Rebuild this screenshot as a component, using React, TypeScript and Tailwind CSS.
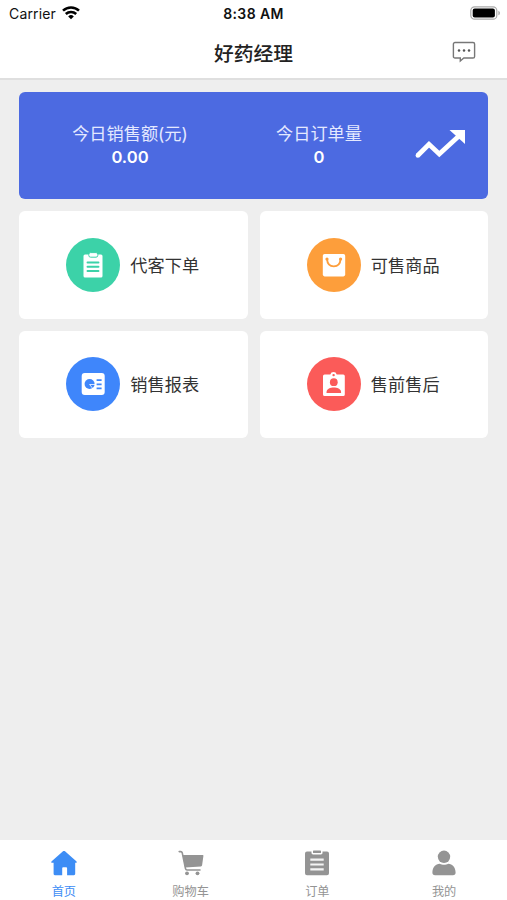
import React from 'react';

const ClipboardIcon = () => (
  <svg width="20" height="26" viewBox="0 0 20 26">
    <rect x="0.5" y="2.5" width="19" height="23" rx="1.5" fill="#fff" />
    <rect x="5.8" y="0.6" width="9" height="4.6" rx="1.8" fill="#fff" stroke="#3cd2a8" strokeWidth="1" />
    <path d="M4.5 10.5h11M4.5 14.7h11M4.5 19h11" stroke="#3cd2a8" strokeWidth="1.9" strokeLinecap="round" />
  </svg>
);

const BagIcon = () => (
  <svg width="24" height="24" viewBox="0 0 24 24">
    <rect x="0.8" y="1" width="22.4" height="22.4" rx="1.8" fill="#fff" />
    <circle cx="5" cy="6" r="1.6" fill="#fd9e3b" />
    <circle cx="18.6" cy="6" r="1.6" fill="#fd9e3b" />
    <path d="M5 6c.4 5 3.1 7.400 6.800 7.400S18.200 11 18.600 6" fill="none" stroke="#fd9e3b" strokeWidth="1.9" />
  </svg>
);

const ReportIcon = () => (
  <svg width="24" height="24" viewBox="0 0 24 24">
    <rect x="0.7" y="1" width="23" height="22" rx="3" fill="#fff" />
    <circle cx="8.6" cy="12" r="5" fill="#3f86fb" />
    <path d="M8.600 12.500h5.800M8.600 12.500l3.600 4.500" stroke="#fff" strokeWidth="0.8" />
    <path d="M15.600 8.200h5M15.600 12.300h5M15.600 16.400h5" stroke="#3f86fb" strokeWidth="1.7" />
  </svg>
);

const ServiceIcon = () => (
  <svg width="24" height="26" viewBox="0 0 24 26">
    <path d="M2.600 3.500h5.700a3.300 3.300 0 0 1 6.400 0h6.500a1.600 1.600 0 0 1 1.600 1.600v18.300a1.600 1.600 0 0 1-1.600 1.600H2.600A1.600 1.600 0 0 1 1 23.400V5.100a1.600 1.600 0 0 1 1.600-1.600z" fill="#fff" />
    <circle cx="11.6" cy="4.1" r="1.2" fill="#fb5b59" />
    <circle cx="11.8" cy="11.2" r="3.9" fill="#fb5b59" />
    <path d="M4.500 21.500c0-3.900 4.100-4.900 7.300-4.900s7.300 1 7.300 4.900v.4H4.500z" fill="#fb5b59" />
  </svg>
);

const menus = [
  { name: '代客下单', color: 'bg-[#3cd2a8]', icon: <ClipboardIcon /> },
  { name: '可售商品', color: 'bg-[#fd9e3b]', icon: <BagIcon /> },
  { name: '销售报表', color: 'bg-[#3f86fb]', icon: <ReportIcon /> },
  { name: '售前售后', color: 'bg-[#fb5b59]', icon: <ServiceIcon /> },
];

const tabs = [
  {
    name: '首页',
    active: true,
    icon: (
      <path d="M13 .9c.4 0 .7.1 1 .4l11.300 10c.8.8.5 1.500-.4 1.500h-.7V23.800c0 .9-.5 1.400-1.300 1.400h-6.800V18.600c0-.9-.4-1.300-1.300-1.300h-2.300c-.9 0-1.300.4-1.300 1.300v6.600H3.900c-.8 0-1.300-.5-1.300-1.400v-11H1.100c-.9 0-1.200-.7-.4-1.500L12 1.300c.3-.3.6-.4 1-.4z" />
    ),
  },
  {
    name: '购物车',
    active: false,
    icon: (
      <>
        <path d="M4.600 4.900h20c.6 0 .9.4.8 1l-1.300 9.300c-.1.700-.5 1.100-1.200 1.200L7 17.400z" />
        <path d="M1.200 1.600h1.600c.8 0 1.200.4 1.400 1.100l3.300 16c.2.900.7 1.300 1.500 1.300h13" fill="none" stroke="currentColor" strokeWidth="1.6" strokeLinecap="round" />
        <circle cx="9" cy="23.300" r="1.9" />
        <circle cx="19.5" cy="23.300" r="1.9" />
      </>
    ),
  },
  {
    name: '订单',
    active: false,
    icon: (
      <>
        <path d="M3 1.500h4.500v1.300c0 1 .6 1.600 1.600 1.600h7.800c1 0 1.600-.6 1.600-1.600V1.500H23a2 2 0 0 1 2 2v19.700a2 2 0 0 1-2 2H3a2 2 0 0 1-2-2V3.500a2 2 0 0 1 2-2z" />
        <rect x="9" y="0.5" width="8" height="2.6" rx="0.6" />
        <path d="M6.300 9.600h13.400M6.300 14.500h13.400M6.300 19.400h13.400" stroke="#f4f4f4" strokeWidth="2.1" />
      </>
    ),
  },
  {
    name: '我的',
    active: false,
    icon: (
      <>
        <circle cx="13" cy="6.8" r="6.2" />
        <path d="M1.400 22.500c0-5.200 3.200-8.800 7.300-8.800 1.500.8 2.800 1.100 4.300 1.100s2.800-.3 4.300-1.100c4.100 0 7.300 3.600 7.300 8.800 0 1.800-.9 2.700-2.700 2.700H4.100c-1.800 0-2.700-.9-2.700-2.700z" />
      </>
    ),
  },
];

const StatusBar = () => (
  <div className="grid h-[26px] grid-cols-3 items-center pl-[9px] pr-[6px] text-[#111]">
    <div className="flex items-center gap-[6px] text-[14px] tracking-[0.15px]">
      Carrier
      <svg width="18" height="14" viewBox="0 0 18 14" fill="none" stroke="#000" strokeWidth="2.5">
        <path d="M1 4.700a11.500 11.500 0 0 1 16 0M3.800 8a7.500 7.500 0 0 1 10.400 0" />
        <path d="M9 13.300 6.200 10.400a4 4 0 0 1 5.600 0z" fill="#000" stroke="none" />
      </svg>
    </div>
    <div className="-ml-[3px] text-center text-[14px] font-semibold tracking-[0.4px]">8:38 AM</div>
    <svg className="justify-self-end" width="31" height="14" viewBox="0 0 31 14">
      <rect x="0.8" y="0.8" width="26" height="12.4" rx="3.8" fill="#fff" stroke="#aaa" strokeWidth="1.2" />
      <rect x="2.7" y="2.5" width="22.2" height="9" rx="2" fill="#000" />
      <path d="M28.400 4.700c2 .8 2 3.800 0 4.600z" fill="#aaa" />
    </svg>
  </div>
);

const Header = () => (
  <header className="h-20 border-b-2 border-[#dfdfdf] bg-white">
    <StatusBar />
    <div className="grid h-[52px] grid-cols-[1fr_auto_1fr] items-center pr-[31px]">
      <h1 className="col-start-2 ml-[31px] mt-[5px] text-[19.8px] font-medium text-[#222]">好药经理</h1>
      <svg className="justify-self-end" width="24" height="22" viewBox="0 0 24 22">
        <path d="M3 1.500h18a1.600 1.600 0 0 1 1.600 1.600v12.300a1.600 1.600 0 0 1-1.600 1.600h-9.200L8.300 20v-3H3a1.600 1.600 0 0 1-1.600-1.600V3.100A1.600 1.600 0 0 1 3 1.500z" fill="none" stroke="#777" strokeWidth="1.4" />
        <circle cx="7" cy="9.600" r="1.25" fill="#555" />
        <circle cx="12" cy="9.600" r="1.25" fill="#555" />
        <circle cx="17" cy="9.600" r="1.25" fill="#555" />
      </svg>
    </div>
  </header>
);

const Stat = ({ label, value }: { label: string; value: string }) => (
  <div className="text-center text-[17.2px] leading-[24px] text-white">
    <div className="text-[#e4e9ff]">{label}</div>
    <div className="-mt-px text-[16.6px] font-semibold">{value}</div>
  </div>
);

const App = () => {
  return (
    <div className="flex h-[900px] w-full flex-col bg-[#eeeeee] font-['Inter','Noto_Sans_CJK_SC',sans-serif]">
      <Header />

      <main className="flex flex-1 flex-col gap-3 px-[19px] pt-3">
        <section className="grid h-[107px] grid-cols-[222px_156px_1fr] items-center rounded-md bg-[#4c6ae1]">
          <Stat label="今日销售额(元)" value="0.00" />
          <Stat label="今日订单量" value="0" />
          <svg className="ml-[17px] -mt-1" width="53" height="32" viewBox="0 0 53 32">
            <path d="M4 27.300 15 16.300l10.300 9.700L46 7" fill="none" stroke="#fff" strokeWidth="4.8" />
            <circle cx="3.9" cy="27.4" r="2.3" fill="#fff" />
            <path d="M35.500 2H51v14z" fill="#fff" />
          </svg>
        </section>

        <section className="grid grid-cols-2 gap-3">
          {menus.map((menu) => (
            <div key={menu.name} className="flex h-[107.5px] items-center justify-center gap-[10px] rounded-md bg-white pr-px">
              <div className={`flex h-[54px] w-[54px] items-center justify-center rounded-full ${menu.color}`}>
                {menu.icon}
              </div>
              <span className="mt-[2px] text-[17.2px] text-[#333]">{menu.name}</span>
            </div>
          ))}
        </section>
      </main>

      <nav className="grid h-[60px] grid-cols-4 bg-white">
        {tabs.map((tab) => (
          <div
            key={tab.name}
            className={`flex flex-col items-center pl-px pt-[10px] ${tab.active ? 'text-[#3d8df5]' : 'text-[#949494]'}`}
          >
            <svg width="26" height="26" viewBox="0 0 26 26" fill="currentColor">
              {tab.icon}
            </svg>
            <span className="mt-[7px] text-[12.2px] leading-[18px]">{tab.name}</span>
          </div>
        ))}
      </nav>
    </div>
  );
};

export default App;
